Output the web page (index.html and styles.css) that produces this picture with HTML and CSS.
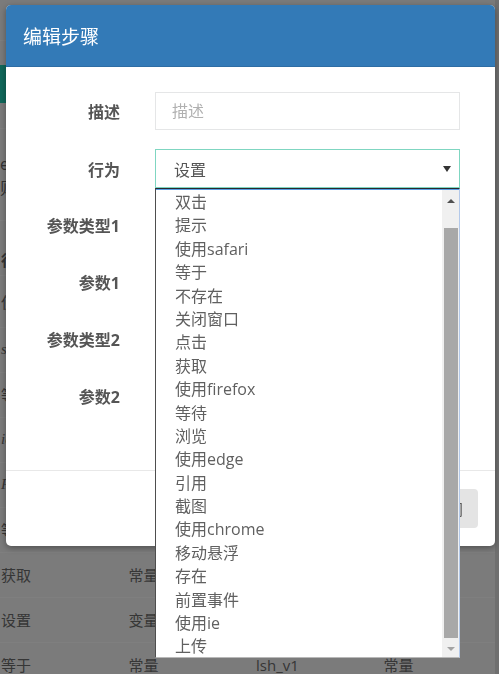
FILE: index.html
```html
<!DOCTYPE html>
<html lang="zh-CN">
<head>
<meta charset="utf-8">
<title>编辑步骤</title>
<link rel="stylesheet" href="styles.css">
</head>
<body>
<div class="page">
  <div class="topbar"><div class="topline"></div></div>
  <div class="navbar"></div>
  <div class="info">
    <p>e</p>
    <p>则</p>
  </div>
  <table class="steps">
    <thead>
      <tr><th>行为</th><th>参数类型1</th><th>参数1</th><th>参数类型2</th></tr>
    </thead>
    <tbody>
      <tr class="tall"><td>使用</td><td></td><td></td><td></td></tr>
      <tr><td class="it">safari</td><td></td><td></td><td></td></tr>
      <tr><td>等待</td><td></td><td></td><td></td></tr>
      <tr><td class="it">ie</td><td></td><td></td><td></td></tr>
      <tr><td class="it">F</td><td></td><td></td><td></td></tr>
      <tr><td>等待</td><td></td><td></td><td></td></tr>
      <tr><td>获取</td><td>常量</td><td></td><td></td></tr>
      <tr><td>设置</td><td>变量</td><td></td><td></td></tr>
      <tr><td>等于</td><td>常量</td><td>lsh_v1</td><td>常量</td></tr>
    </tbody>
  </table>
</div>
<div class="backdrop"></div>
<div class="modal">
  <div class="modal-header">编辑步骤</div>
  <div class="modal-body">
    <div class="form-row">
      <label class="form-label">描述</label>
      <input class="form-input" type="text" placeholder="描述">
    </div>
    <div class="form-row">
      <label class="form-label">行为</label>
      <div class="select">
        <span class="select-value">设置</span>
        <span class="select-arrow"></span>
        <div class="dropdown">
          <ul class="options">
            <li>双击</li>
            <li>提示</li>
            <li>使用safari</li>
            <li>等于</li>
            <li>不存在</li>
            <li>关闭窗口</li>
            <li>点击</li>
            <li>获取</li>
            <li>使用firefox</li>
            <li>等待</li>
            <li>浏览</li>
            <li>使用edge</li>
            <li>引用</li>
            <li>截图</li>
            <li>使用chrome</li>
            <li>移动悬浮</li>
            <li>存在</li>
            <li>前置事件</li>
            <li>使用ie</li>
            <li>上传</li>
          </ul>
          <div class="scrollbar">
            <div class="sb-btn sb-up"><span class="tri-up"></span></div>
            <div class="sb-track"><div class="sb-thumb"></div></div>
            <div class="sb-btn sb-down"><span class="tri-down"></span></div>
          </div>
        </div>
      </div>
    </div>
    <div class="form-row">
      <label class="form-label">参数类型1</label>
      <div class="form-input"></div>
    </div>
    <div class="form-row">
      <label class="form-label">参数1</label>
      <div class="form-input"></div>
    </div>
    <div class="form-row">
      <label class="form-label">参数类型2</label>
      <div class="form-input"></div>
    </div>
    <div class="form-row">
      <label class="form-label">参数2</label>
      <div class="form-input"></div>
    </div>
  </div>
  <div class="modal-footer">
    <button class="btn" type="button">关闭</button>
  </div>
</div>
</body>
</html>
```
FILE: styles.css
```css
* {
  box-sizing: border-box;
  margin: 0;
  padding: 0;
}

html, body {
  width: 499px;
  height: 674px;
  overflow: hidden;
}

body {
  font-family: "Open Sans", "Noto Sans CJK SC", sans-serif;
  background: #dedede;
  color: #676a6c;
  position: relative;
}

/* ---------- background page ---------- */
.page {
  width: 495px;
  height: 674px;
  background: #f7f7f7;
  overflow: hidden;
}

.topbar {
  height: 65px;
  padding-top: 40px;
}

.topline {
  height: 1px;
  background: #ffffff;
}

.navbar {
  height: 38px;
  width: 200px;
  background: #20d0b6;
}

.info {
  margin-top: 25px;
  border-top: 1px solid #ffffff;
  border-bottom: 1px solid #ffffff;
  height: 93px;
  padding-top: 23px;
  font-size: 16px;
  line-height: 24px;
  color: #666;
}

.steps {
  border-collapse: collapse;
  table-layout: fixed;
  width: 510px;
  font-size: 15px;
  color: #6c6c6c;
}

.steps th,
.steps td {
  width: 127px;
  text-align: left;
  padding: 0 0 0 1px;
  height: 45px;
  border-bottom: 1px solid #ffffff;
  font-weight: normal;
  white-space: nowrap;
}

.steps th {
  height: 54px;
  font-weight: bold;
  vertical-align: bottom;
  padding-bottom: 5px;
}

.steps tr.tall td {
  height: 52px;
}

.steps td.it {
  font-family: "Liberation Serif", serif;
  font-style: italic;
}

.backdrop {
  position: fixed;
  inset: 0;
  background: rgba(0, 0, 0, 0.5);
}

/* ---------- modal ---------- */
.modal {
  position: absolute;
  left: 6px;
  top: 5px;
  width: 489px;
  background: #ffffff;
  border-radius: 5px;
  box-shadow: 0 2px 6px rgba(0, 0, 0, 0.35);
}

.modal-header {
  height: 62px;
  background: #337ab7;
  color: #ffffff;
  font-size: 19px;
  padding-left: 17px;
  display: flex;
  align-items: center;
  border-radius: 5px 5px 0 0;
  border-bottom: 1px solid #2e6da4;
}

.modal-body {
  padding: 25px 35px 55px 0;
  display: flex;
  flex-direction: column;
  gap: 19px;
}

.form-row {
  display: grid;
  grid-template-columns: 114px 305px;
  column-gap: 35px;
  align-items: center;
  height: 38px;
}

.form-label {
  text-align: right;
  font-weight: bold;
  font-size: 16px;
  color: #555555;
}

.form-input {
  height: 38px;
  width: 305px;
  border: 1px solid #e5e6e7;
  padding: 0 16px;
  font-family: inherit;
  font-size: 16px;
  color: #555;
  background: #fff;
  outline: none;
}

.form-input::placeholder {
  color: #b0b0b0;
}

/* ---------- select ---------- */
.select {
  position: relative;
  height: 39px;
  border: 1px solid #7fd6c1;
  display: flex;
  align-items: center;
  justify-content: space-between;
  padding: 0 8px 0 18px;
  font-size: 16px;
  color: #555;
}

.select-arrow {
  width: 0;
  height: 0;
  border-left: 4px solid transparent;
  border-right: 4px solid transparent;
  border-top: 6px solid #333;
  margin-top: 1px;
}

.dropdown {
  position: absolute;
  top: calc(100% + 1px);
  left: -1px;
  width: 305px;
  height: 470px;
  background: #ffffff;
  border-top: 1px solid #2a2a2a;
  border-left: 1px solid #4e4e4e;
  border-right: 1px solid #b3c9ea;
  border-bottom: 1px solid #b8b8b8;
  box-shadow: inset 0 1px 0 #5a9be6;
  display: flex;
  z-index: 10;
}

.options {
  list-style: none;
  flex: 1;
  padding-top: 2px;
  font-size: 16px;
  color: #606060;
}

.options li {
  height: 23.4px;
  line-height: 23.4px;
  padding-left: 19px;
  white-space: nowrap;
}

.scrollbar {
  width: 17px;
  margin-top: 1px;
  background: #f0f0f0;
  display: flex;
  flex-direction: column;
}

.sb-btn {
  display: flex;
  align-items: center;
  justify-content: center;
}

.sb-up {
  height: 22px;
}

.sb-down {
  height: 17px;
  margin-top: 2px;
}

.tri-up {
  width: 0;
  height: 0;
  border-left: 4px solid transparent;
  border-right: 4px solid transparent;
  border-bottom: 4px solid #505050;
}

.tri-down {
  width: 0;
  height: 0;
  border-left: 4px solid transparent;
  border-right: 4px solid transparent;
  border-top: 4px solid #a3a3a3;
}

.sb-track {
  flex: 1;
  display: flex;
  flex-direction: column;
  justify-content: flex-end;
}

.sb-thumb {
  height: 410px;
  margin: 0 1px 0 2px;
  background: #a8a8a8;
}

/* ---------- footer ---------- */
.modal-footer {
  border-top: 1px solid #e8e8e8;
  padding: 18px 17px;
  display: flex;
  justify-content: flex-end;
}

.btn {
  height: 39px;
  width: 60px;
  border: none;
  border-radius: 4px;
  background: #e4e4e4;
  color: #555;
  font-family: inherit;
  font-size: 15px;
}
```
